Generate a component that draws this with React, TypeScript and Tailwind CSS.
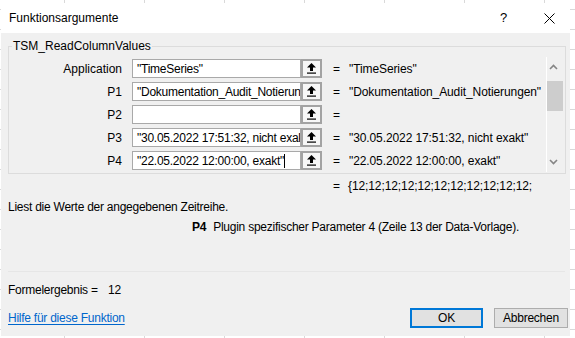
import React from 'react';

const rows = [
  { label: 'Application', input: '"TimeSeries"', value: '"TimeSeries"' },
  { label: 'P1', input: '"Dokumentation_Audit_Notierungen"', value: '"Dokumentation_Audit_Notierungen"' },
  { label: 'P2', input: '', value: '' },
  { label: 'P3', input: '"30.05.2022 17:51:32, nicht exakt"', value: '"30.05.2022 17:51:32, nicht exakt"' },
  { label: 'P4', input: '"22.05.2022 12:00:00, exakt"', value: '"22.05.2022 12:00:00, exakt"', caret: true },
];

const PickIcon = () => (
  <svg width="9" height="11" viewBox="0 0 9 11">
    <polygon points="4.5,0 0,4.5 9,4.5" fill="#000" />
    <rect x="3" y="4" width="3" height="4" fill="#000" />
    <rect x="0" y="9.5" width="9" height="1.2" fill="#000" />
  </svg>
);

const ArgRow = ({ label, input, value, caret }: { label: string; input: string; value: string; caret?: boolean }) => (
  <div className="flex items-center h-[19px]">
    <div className="w-[113px] text-right tracking-normal">{label}</div>
    <div className="ml-[10px] w-[169px] h-[19px] bg-white border border-[#a9a9a9] pl-[4px] pr-[3px] flex items-center overflow-hidden whitespace-nowrap">
      {input}
      {caret && <span className="inline-block w-px h-[14px] bg-black" />}
    </div>
    <div className="w-[21px] h-[19px] border-2 border-[#a3a3a3] bg-[#f7f7f7] flex items-center justify-center">
      <PickIcon />
    </div>
    <div className="ml-[11px] w-[16px]">=</div>
    <div className="flex-1 overflow-hidden whitespace-nowrap mr-[5px] tracking-[-0.1px]">{value}</div>
  </div>
);

export default function App() {
  return (
    <div className="w-[575px] h-[338px] overflow-hidden bg-white bg-[linear-gradient(to_right,#d9d9d9_1px,transparent_1px),linear-gradient(to_bottom,#d9d9d9_1px,transparent_1px)] bg-[size:80px_20px] bg-[position:64px_9px] pt-[3px] pl-[1px] font-['Liberation_Sans',Arial,sans-serif] text-[12px] leading-[16px] tracking-[-0.25px] text-black">
      <div className="w-[569px] h-[333px] flex flex-col bg-[#f0f0f0]">
        {/* title bar */}
        <div className="h-[30px] shrink-0 bg-white flex items-center pl-[8px] pr-[15px] tracking-normal">
          <span className="flex-1">Funktionsargumente</span>
          <span className="text-[13px] w-[8px]">?</span>
          <svg className="ml-[36px]" width="11" height="11" viewBox="0 0 11 11">
            <path d="M0.5 0.5 L10.5 10.5 M10.5 0.5 L0.5 10.5" stroke="#000" strokeWidth="1" />
          </svg>
        </div>

        <div className="flex-1 flex flex-col pl-[7px] pr-[4px]">
          {/* group box */}
          <div className="relative mt-[13px] h-[128px] border border-[#dcdcdc] flex">
            <span className="absolute -top-[9px] left-[3px] px-[1px] bg-[#f0f0f0] tracking-normal">TSM_ReadColumnValues</span>
            <div className="flex-1 flex flex-col gap-[4px] pt-[12px]">
              {rows.map((r) => (
                <ArgRow key={r.label} {...r} />
              ))}
            </div>
            <div className="mt-[10px] mb-[1px] w-[17px] border-l border-white flex flex-col items-center justify-between py-[7px] relative mr-[6px]">
              <svg width="9" height="6" viewBox="0 0 9 6">
                <polyline points="1,5 4.5,1.5 8,5" fill="none" stroke="#858585" strokeWidth="1.6" />
              </svg>
              <svg width="9" height="6" viewBox="0 0 9 6">
                <polyline points="1,1 4.5,4.5 8,1" fill="none" stroke="#858585" strokeWidth="1.6" />
              </svg>
              <div className="absolute left-0 top-[24px] w-[16px] h-[30px] bg-[#cdcdcd]" />
            </div>
          </div>

          <div className="mt-[4px] flex">
            <span className="ml-[325px] w-[15px]">=</span>
            <span className="tracking-[-0.1px]">{'{12;12;12;12;12;12;12;12;12;12;12;'}</span>
          </div>
          <div className="mt-[5px]">Liest die Werte der angegebenen Zeitreihe.</div>
          <div className="mt-[4px] flex">
            <span className="ml-[184px] font-bold">P4</span>
            <span className="ml-[7px]">Plugin spezifischer Parameter 4 (Zeile 13 der Data-Vorlage).</span>
          </div>

          <div className="mt-[36px] h-px bg-[#e6e6e6] mr-[1px]" />

          <div className="mt-[10px] flex">
            <span className="w-[100px]">Formelergebnis =</span>
            <span>12</span>
          </div>

          <div className="mt-[10px] flex items-center h-[20px]">
            <a className="flex-1 text-[#0066cc] underline underline-offset-2">Hilfe für diese Funktion</a>
            <button className="w-[73px] h-[20px] border-2 border-[#0078d7] bg-[#e1e1e1] text-[12px] leading-[14px]">OK</button>
            <button className="ml-[11px] mr-[-2px] w-[74px] h-[20px] border border-[#adadad] bg-[#e1e1e1] text-[12px] leading-[16px]">Abbrechen</button>
          </div>
        </div>
      </div>
    </div>
  );
}
